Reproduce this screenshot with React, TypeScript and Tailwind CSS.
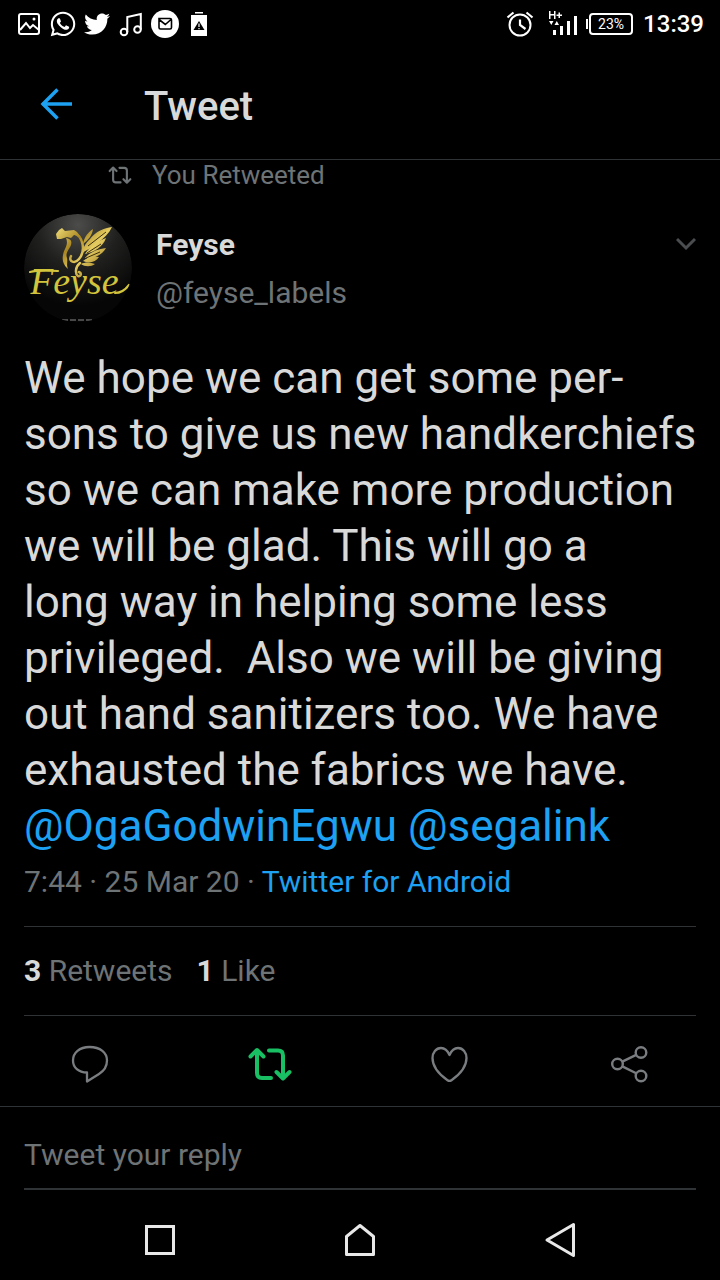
import { useState } from 'react';
import type { ReactNode } from 'react';
import { FaTwitter, FaWhatsapp } from 'react-icons/fa';

const RetweetIcon = ({ className }: { className: string }) => (
  <svg
    viewBox="0 0 44 34"
    className={className}
    fill="none"
    stroke="currentColor"
    strokeWidth="4"
    strokeLinecap="round"
    strokeLinejoin="round"
    aria-hidden="true"
  >
    <path d="M2.5 9.500 9 3 15.500 9.500M9 4v22q0 5 5 5h9" />
    <path d="M28.500 25 35 31.500 41.500 25M35 31V8.500q0-5-5-5h-9" />
  </svg>
);

const ReplyIcon = () => (
  <svg viewBox="0 0 40 40" className="size-10" fill="none" stroke="currentColor" strokeWidth="2.300" strokeLinejoin="round" aria-hidden="true">
    <path d="M19.500 3C9.500 3 3 9 3 16.500c0 7 5.500 12 14 12V37.500l12-7.500c6-3.800 8-8 8-13.500C37 9 30.500 3 19.500 3Z" />
  </svg>
);

const HeartIcon = () => (
  <svg viewBox="0 0 40 40" className="size-10" fill="none" stroke="currentColor" strokeWidth="2.300" strokeLinejoin="round" aria-hidden="true">
    <path d="M19.500 11C17.500 6.500 14.500 4 11 4 6 4 2.500 8.500 2.500 14 2.500 24 11.500 32 17.500 36.200q2 1.400 4 0C27.500 32 36.500 24 36.500 14 36.500 8.500 33 4 28 4c-3.500 0-6.500 2.500-8.500 7Z" />
  </svg>
);

const ShareIcon = () => (
  <svg viewBox="0 0 40 40" className="size-10" fill="none" stroke="currentColor" strokeWidth="2.400" aria-hidden="true">
    <circle cx="7.500" cy="20" r="5.300" />
    <circle cx="31" cy="8.500" r="5.300" />
    <circle cx="31" cy="32" r="5.300" />
    <path d="m12.300 17.600 13.900-6.700M12.300 22.400l13.900 6.900" />
  </svg>
);

function StatusBar() {
  return (
    <div className="flex h-12 items-center justify-between px-4">
      <div className="flex items-center gap-2 text-white">
        <svg viewBox="0 0 26 26" className="size-[26px]" fill="none" stroke="currentColor" strokeWidth="2" aria-hidden="true">
          <rect x="3" y="3" width="20" height="20" rx="2" />
          <path d="m4 19 6-7 4 5 3-3 6 5" />
          <circle cx="18" cy="8" r="1.500" fill="currentColor" stroke="none" />
        </svg>
        <FaWhatsapp className="-mx-px size-7" />
        <FaTwitter className="size-[26px]" />
        <svg viewBox="0 0 26 26" className="size-[26px]" fill="none" stroke="currentColor" strokeWidth="2" aria-hidden="true">
          <circle cx="6" cy="21" r="3.300" />
          <circle cx="19.500" cy="18.500" r="3.300" />
          <path d="M9.300 21V6l13.500-3v15.500" />
        </svg>
        <svg viewBox="0 0 28 28" className="-mx-px size-7" aria-hidden="true">
          <circle cx="14" cy="14" r="14" fill="white" />
          <path d="M8 8.500h11q1.500 0 1.500 1.500v7.500q0 1.500-1.500 1.500H9.500q-1.500 0-1.500-1.500Zm0 1 6.300 5 5.700-5" fill="none" stroke="black" strokeWidth="1.600" />
        </svg>
        <svg viewBox="0 0 26 26" className="size-[26px]" aria-hidden="true">
          <path d="M9 1h8v1.500H9zM5 4h16v21H5z" fill="white" />
          <path d="m13 10 5.500 9h-11Z" fill="black" />
          <path d="M13 12.500v3.500m0 1v1.300" stroke="white" strokeWidth="1.200" />
        </svg>
      </div>
      <div className="flex items-center gap-2 text-white">
        <svg viewBox="0 0 28 28" className="size-7" fill="none" stroke="currentColor" strokeWidth="2" aria-hidden="true">
          <circle cx="14" cy="15" r="10.500" />
          <path d="M14 9.500v5.500l5.500 4M1.500 7.500l6-5M26.500 7.500l-6-5" strokeWidth="2.200" />
        </svg>
        <svg viewBox="0 0 32 28" className="ml-1 h-7 w-8" fill="currentColor" aria-hidden="true">
          <path d="M3 1h1.500v3H8V1h1.500v8H8V5.500H4.500V9H3zM12.500 2.500H14v2h2V6h-2v2h-1.500V6h-2V4.500h2z" />
          <path d="M3 11h4.500l-2.200 4zM8.500 15H13l-2.200-4zM7 20h3v5H7zM14 16h3v9h-3zM21 11h3v14h-3zM28 6h3v19h-3z" />
        </svg>
        <div className="flex items-center gap-px">
          <span className="h-[10px] w-[2px] bg-white" />
          <span className="flex h-[22px] w-[44px] items-center justify-center rounded-sm border-2 border-white text-[14px] leading-none">
            23%
          </span>
        </div>
        <time className="ml-0.5 text-[24px] font-medium leading-8">13:39</time>
      </div>
    </div>
  );
}

function Avatar() {
  return (
    <svg viewBox="0 0 108 108" className="size-[108px] shrink-0 rounded-full" role="img" aria-label="Feyse logo">
      <defs>
        <radialGradient id="backdrop" cx="0.5" cy="0.1" r="0.75">
          <stop offset="0" stopColor="#4c4c4a" />
          <stop offset="0.5" stopColor="#20201f" />
          <stop offset="1" stopColor="#060606" />
        </radialGradient>
        <linearGradient id="gold" gradientUnits="userSpaceOnUse" x1="32" y1="14" x2="80" y2="60">
          <stop offset="0" stopColor="#f0dc78" />
          <stop offset="0.35" stopColor="#a98621" />
          <stop offset="0.6" stopColor="#e6cd62" />
          <stop offset="1" stopColor="#8f701a" />
        </linearGradient>
      </defs>
      <circle cx="54" cy="54" r="54" fill="url(#backdrop)" />
      {/* winged horse */}
      <g fill="url(#gold)">
        <path d="m32 20 3-4 3-2 3 3 9-1 3 2 3 4-6-1-3 3-4-1-6 2-4 0Z" />
        <path d="M42 24c5 1 6 3 5 7-2 5-6 8-4 13 1 4-1 6 1 11-5-4-6-9-5-14 1-6 6-10 3-17Z" />
        <path d="M88 13c-8 1-16 4-22 12-5 5-7 9-8 14C66 34 82 26 88 13Z" />
        <path d="M82 24c-8 3-16 8-21 16 9-2 18-7 21-16ZM82 34c-8 1-16 4-21 10 9 1 17-3 21-10ZM75 43c-6-1-12 0-16 4 6 3 13 1 16-4Z" />
        <path d="M69 15c-6 4-9 9-10 15 5-4 9-8 10-15ZM71 50c-5-2-10-2-14 0 4 3 10 3 14 0Z" />
      </g>
      <path d="M64 32 82 18M63 39l14-9M62 44l14-6" stroke="#3d3010" strokeWidth="1" />
      <path
        d="M50 19c9 3 12 18 5 26-4 5-11 3-8-3m9 7c-5 4-5 11-2 13 3 1 4-3 1-4"
        fill="none"
        stroke="url(#gold)"
        strokeWidth="2.500"
        strokeLinecap="round"
      />
      <text x="6" y="80" className="font-['Liberation_Serif'] text-[38px] italic" fill="#d2c43c">
        Feyse
      </text>
      <path d="M6 58q8-2 28-1M91 79q8 0 14-8" fill="none" stroke="#d2c43c" strokeWidth="2.200" strokeLinecap="round" />
      <path d="M38 106h30" stroke="#8a8a8a" strokeWidth="1" strokeDasharray="6 2" />
    </svg>
  );
}

interface ActionButtonProps {
  label: string;
  children: ReactNode;
  onClick?: () => void;
  pressed?: boolean;
}

function ActionButton({ label, children, onClick, pressed }: ActionButtonProps) {
  return (
    <button type="button" aria-label={label} aria-pressed={pressed} onClick={onClick} className="flex h-[84px] items-center justify-center">
      {children}
    </button>
  );
}

export default function App() {
  const [retweeted, setRetweeted] = useState(true);
  const [reply, setReply] = useState('');

  return (
    <div className="flex min-h-screen flex-col bg-black font-[Roboto,sans-serif] text-[#d9d9d9]">
      <StatusBar />

      <header className="flex h-28 items-center border-b border-[#2f3336] pl-9">
        <button type="button" aria-label="Back" className="text-[#1da1f2]">
          <svg viewBox="0 0 40 40" className="size-10" fill="none" stroke="currentColor" strokeWidth="3.500" aria-hidden="true">
            <path d="M36 20H6M21.500 5.500 7 20l14.500 14.500" />
          </svg>
        </button>
        <h1 className="ml-[68px] pt-1.5 text-[40px] font-medium leading-12">Tweet</h1>
      </header>

      <main className="flex flex-col">
        <p className="flex h-[30px] items-center gap-5 pl-[108px] text-[26px] leading-8 text-[#6e7376]">
          <RetweetIcon className="h-[18px] w-6" />
          You Retweeted
        </p>

        <article className="px-6">
          <div className="flex items-start pt-6">
            <Avatar />
            <div className="ml-6 flex-1 pt-[11px]">
              <p className="text-[30px] font-bold leading-10">Feyse</p>
              <p className="mt-2 text-[30px] leading-10 text-[#6e7376]">@feyse_labels</p>
            </div>
            <button type="button" aria-label="More options" className="mt-5 text-[#4a4d4f]">
              <svg viewBox="0 0 20 20" className="size-5" fill="none" stroke="currentColor" strokeWidth="3" aria-hidden="true">
                <path d="m1 5 9 9 9-9" />
              </svg>
            </button>
          </div>

          <p className="-mr-1 mt-7 text-[44px] leading-[56px]">
            We hope we can get some per&shy;sons to give us new handkerchiefs
            <br />
            so we can make more production
            <br />
            we will be glad. This will go a
            <br />
            long way in helping some less
            <br />
            privileged.&nbsp; Also we will be giving
            <br />
            out hand sanitizers too. We have
            <br />
            exhausted the fabrics we have.
            <br />
            <a href="#OgaGodwinEgwu" className="text-[#1da1f2]">@OgaGodwinEgwu</a>{' '}
            <a href="#segalink" className="text-[#1da1f2]">@segalink</a>
          </p>

          <p className="mt-2 text-[30px] leading-10 text-[#6e7376]">
            7:44 · 25 Mar 20 ·{' '}
            <a href="#source" className="text-[#1da1f2]">Twitter for Android</a>
          </p>

          <div className="mt-6 flex h-[90px] items-center gap-6 border-y border-[#2f3336] text-[30px] leading-10 text-[#6e7376]">
            <span>
              <strong className="font-bold text-[#d9d9d9]">3</strong> Retweets
            </span>
            <span>
              <strong className="font-bold text-[#d9d9d9]">1</strong> Like
            </span>
          </div>
        </article>

        <div className="grid grid-cols-4 border-b border-[#2f3336] pt-1.5 text-[#7a7d80]">
          <ActionButton label="Reply">
            <ReplyIcon />
          </ActionButton>
          <ActionButton label="Retweet" pressed={retweeted} onClick={() => setRetweeted(!retweeted)}>
            <RetweetIcon className={retweeted ? 'h-[34px] w-11 text-[#19bf63]' : 'h-[34px] w-11'} />
          </ActionButton>
          <ActionButton label="Like">
            <HeartIcon />
          </ActionButton>
          <ActionButton label="Share">
            <ShareIcon />
          </ActionButton>
        </div>

        <form className="px-6" onSubmit={(e) => e.preventDefault()}>
          <input
            type="text"
            aria-label="Tweet your reply"
            placeholder="Tweet your reply"
            value={reply}
            onChange={(e) => setReply(e.target.value)}
            className="h-[83px] w-full border-b-2 border-[#2f3336] pt-3.5 text-[30px] outline-none placeholder:text-[#6e7376]"
          />
        </form>
      </main>

      <nav className="mt-auto flex h-20 items-center justify-center gap-40 text-[#e8e8e8]">
        <button type="button" aria-label="Recent apps">
          <svg viewBox="0 0 40 40" className="size-10" fill="none" stroke="currentColor" strokeWidth="3" aria-hidden="true">
            <rect x="6.500" y="6.500" width="27" height="27" />
          </svg>
        </button>
        <button type="button" aria-label="Home">
          <svg viewBox="0 0 40 40" className="size-10" fill="none" stroke="currentColor" strokeWidth="3" strokeLinejoin="round" aria-hidden="true">
            <path d="M6.500 34.500v-18L20 5.500l13.500 11v18Z" />
          </svg>
        </button>
        <button type="button" aria-label="Go back">
          <svg viewBox="0 0 40 40" className="size-10" fill="none" stroke="currentColor" strokeWidth="3" strokeLinejoin="round" aria-hidden="true">
            <path d="M33.500 4.500v31L7 20Z" />
          </svg>
        </button>
      </nav>
    </div>
  );
}
